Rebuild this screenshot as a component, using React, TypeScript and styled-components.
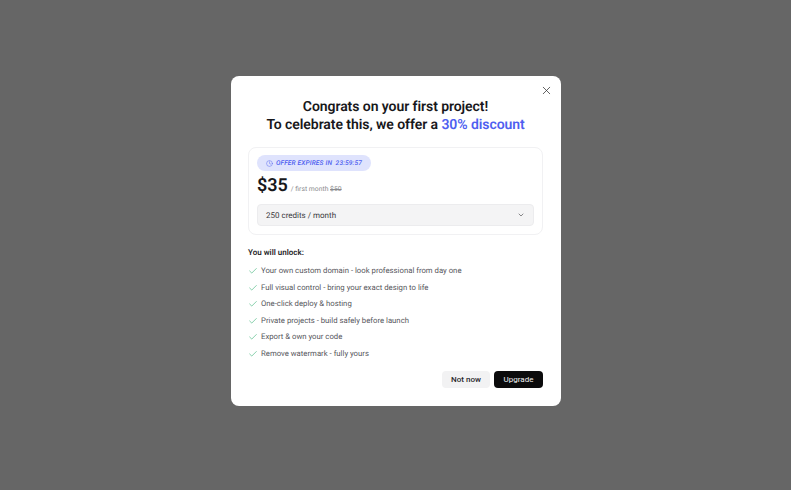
import React from "react";
import styled, { createGlobalStyle } from "styled-components";
import { X, Check, Clock, ChevronDown } from "lucide-react";

const Global = createGlobalStyle`
  html, body { margin: 0; padding: 0; height: 100%; }
  body { font-family: "Roboto", "Liberation Sans", sans-serif; background: #666666; text-rendering: geometricPrecision; }
  #root { height: 100%; }
`;
const Page = styled.div`
  width: 791px; height: 490px; background: #666666;
  display: flex; justify-content: center; align-items: flex-start; padding-top: 76px; box-sizing: border-box;
`;
const Modal = styled.div`
  position: relative; width: 330px; height: 330px; box-sizing: border-box;
  background: #fff; border-radius: 8px; padding: 22px 18px 18px 17px;
  display: flex; flex-direction: column; margin-left: 1px;
`;
const CloseBtn = styled.button`
  position: absolute; top: 6px; right: 7px; width: 16px; height: 16px; padding: 0;
  border: 0; background: none; color: #333; display: flex; align-items: center; justify-content: center;
`;
const Title = styled.h2`
  margin: 0; text-align: center; font-size: 14px; line-height: 18px; font-weight: 600; color: #18181b; letter-spacing: -0.07px;
`;
const Accent = styled.span`color: #4f5ff0;`;
const Card = styled.div`
  margin-top: 13px; height: 88px; box-sizing: border-box; border: 1px solid #f1f1f3; border-radius: 8px;
  padding: 7px 8px; display: flex; flex-direction: column; align-items: flex-start;
`;
const Badge = styled.div`
  height: 16px; width: 114px; box-sizing: border-box; border-radius: 8px; background: #dfe3fd; color: #4f5ff0;
  display: flex; align-items: center; justify-content: center; gap: 3px; font-size: 6.6px; font-style: italic; font-weight: 500;
  letter-spacing: 0.15px; white-space: pre;
`;
const PriceRow = styled.div`
  margin-top: 3px; display: flex; align-items: baseline; gap: 3px; height: 24px;
`;
const Price = styled.span`font-size: 18px; line-height: 24px; font-weight: 600; color: #18181b;`;
const PriceNote = styled.span`font-size: 6.8px; color: #8a8a8e;`;
const Old = styled.s`color: #8a8a8e;`;
const Select = styled.div`
  margin-top: 6px; width: 100%; height: 22px; box-sizing: border-box; background: #f4f4f5; border: 1px solid #ececee; border-radius: 4px;
  padding: 0 8px; display: flex; align-items: center; justify-content: space-between; font-size: 8px; color: #3a3a3e;
`;
const Heading = styled.div`
  margin-top: 13px; font-size: 8px; line-height: 10px; font-weight: 600; color: #27272a;
`;
const List = styled.ul`
  list-style: none; margin: 8px 0 0; padding: 0; display: flex; flex-direction: column; gap: 6.5px;
`;
const Item = styled.li`
  display: flex; align-items: center; gap: 3px; font-size: 7.75px; line-height: 10px; color: #56565c; white-space: nowrap;
`;
const Footer = styled.div`
  margin-top: auto; display: flex; justify-content: flex-end; gap: 4px;
`;
const Button = styled.button<{ $primary?: boolean }>`
  height: 17px; border: 0; border-radius: 4px; font: ${p => (p.$primary ? 400 : 500)} 8px "Roboto", sans-serif; padding: 0;
  width: ${p => (p.$primary ? "49px" : "48px")};
  background: ${p => (p.$primary ? "#0b0b0c" : "#f2f2f3")};
  color: ${p => (p.$primary ? "#f5f5f5" : "#27272a")};
`;

const features = [
  "Your own custom domain - look professional from day one",
  "Full visual control - bring your exact design to life",
  "One-click deploy & hosting",
  "Private projects - build safely before launch",
  "Export & own your code",
  "Remove watermark - fully yours",
];

export default function App() {
  return (
    <Page>
      <Global />
      <Modal>
        <CloseBtn aria-label="Close"><X size={13} strokeWidth={1.4} /></CloseBtn>
        <Title>
          Congrats on your first project!<br />
          To celebrate this, we offer a <Accent>30% discount</Accent>
        </Title>
        <Card>
          <Badge><Clock size={7} strokeWidth={1.5} /><span>OFFER EXPIRES IN  23:59:57</span></Badge>
          <PriceRow>
            <Price>$35</Price>
            <PriceNote>/ first month <Old>$50</Old></PriceNote>
          </PriceRow>
          <Select>
            <span>250 credits / month</span>
            <ChevronDown size={8} strokeWidth={1.8} />
          </Select>
        </Card>
        <Heading>You will unlock:</Heading>
        <List>
          {features.map(f => (
            <Item key={f}><Check size={10} strokeWidth={1.3} color="#1fa862" />{f}</Item>
          ))}
        </List>
        <Footer>
          <Button>Not now</Button>
          <Button $primary>Upgrade</Button>
        </Footer>
      </Modal>
    </Page>
  );
}
